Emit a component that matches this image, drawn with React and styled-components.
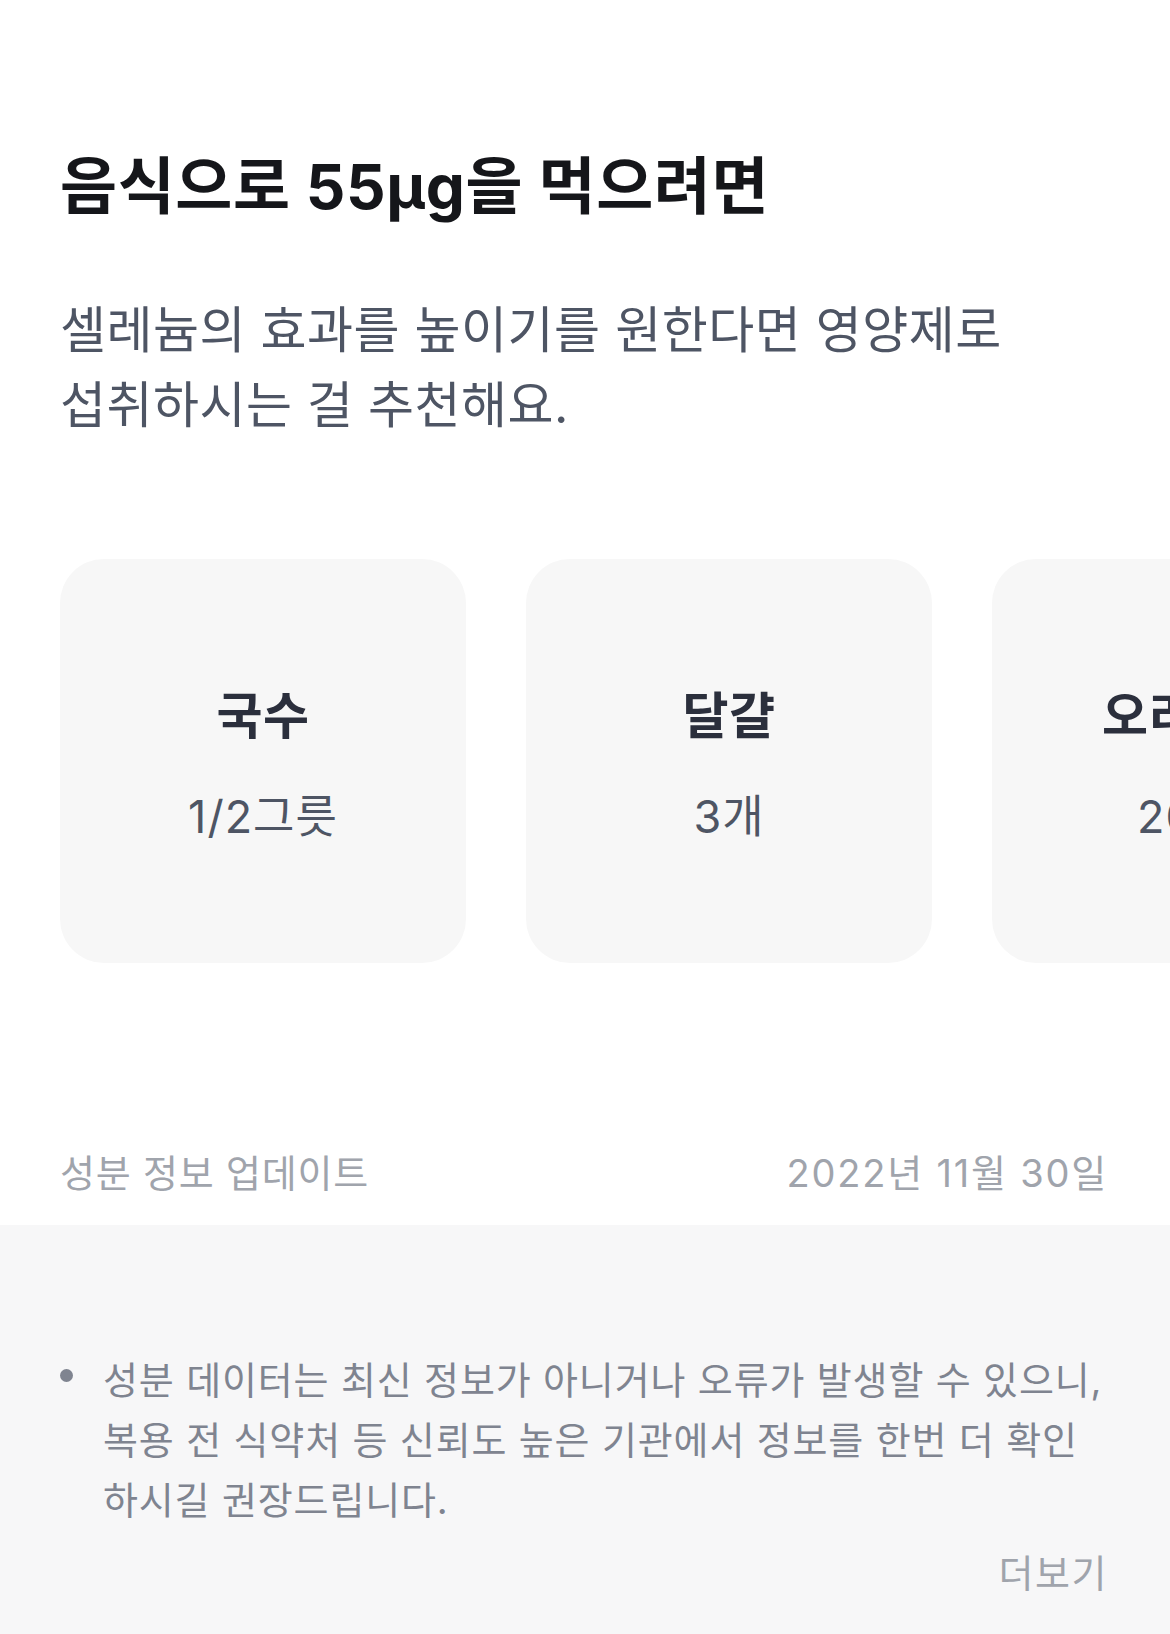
import React from "react";
import styled, {createGlobalStyle} from "styled-components";

const GlobalStyle = createGlobalStyle`
  html, body {
    margin: 0;
    padding: 0;
    background: #ffffff;
  }
  body {
    font-family: Inter, "Noto Sans CJK KR", sans-serif;
    -webkit-font-smoothing: antialiased;
  }
`;

const Page = styled.div`
  width: 1170px;
  overflow: hidden;
`;

const Intro = styled.section`
  padding: 147px 60px 0;
`;

const Title = styled.h1`
  margin: 0;
  font-size: 62px;
  line-height: 80px;
  font-weight: 700;
  letter-spacing: 0.6px;
  color: #15161a;
`;

const Subtitle = styled.p`
  margin: 66px 0 0;
  font-size: 50px;
  line-height: 75px;
  font-weight: 400;
  letter-spacing: 0.5px;
  color: #4e5564;
`;

const CardRow = styled.div`
  display: flex;
  gap: 60px;
  margin-top: 116px;
  padding-left: 60px;
`;

const Card = styled.div`
  flex: 0 0 406px;
  height: 404px;
  box-sizing: border-box;
  padding-top: 127px;
  border-radius: 44px;
  background: #f7f7f7;
  display: flex;
  flex-direction: column;
  align-items: center;
  white-space: nowrap;
`;

const FoodName = styled.div`
  font-size: 50px;
  line-height: 60px;
  font-weight: 700;
  letter-spacing: 0.5px;
  color: #2b2f3c;
`;

const FoodAmount = styled.div`
  margin-top: 43px;
  font-size: 45px;
  line-height: 56px;
  letter-spacing: 1px;
  color: #4e5564;
`;

const UpdateRow = styled.div`
  display: flex;
  justify-content: space-between;
  margin-top: 185px;
  padding: 0 62px 27px 60px;
  font-size: 38px;
  line-height: 50px;
  letter-spacing: 0.8px;
  color: #a0a4ac;
`;

const UpdateDate = styled.span`
  letter-spacing: 1.8px;
`;

const Notice = styled.section`
  background: #f7f7f8;
  padding: 125px 62px 60px 60px;
`;

const NoticeItem = styled.div`
  display: flex;
  align-items: flex-start;
  gap: 30px;
  font-size: 38px;
  line-height: 60px;
  letter-spacing: 0.85px;
  color: #7f8490;
`;

const Dot = styled.span`
  flex: 0 0 13px;
  height: 13px;
  margin-top: 19px;
  border-radius: 50%;
  background: #7f8490;
`;

const MoreLink = styled.div`
  margin-top: 18px;
  text-align: right;
  font-size: 38px;
  line-height: 50px;
  letter-spacing: 1.5px;
  color: #a0a4ac;
`;

const foods = [
    {name: "국수", amount: "1/2그릇"},
    {name: "달걀", amount: "3개"},
    {name: "오리고기", amount: "200g"},
];

export default function App() {
    return <Page>
        <GlobalStyle/>
        <Intro>
            <Title>음식으로 55μg을 먹으려면</Title>
            <Subtitle>
                셀레늄의 효과를 높이기를 원한다면 영양제로<br/>
                섭취하시는 걸 추천해요.
            </Subtitle>
        </Intro>

        <CardRow>
            {foods.map((food) => <Card key={food.name}>
                <FoodName>{food.name}</FoodName>
                <FoodAmount>{food.amount}</FoodAmount>
            </Card>)}
        </CardRow>

        <UpdateRow>
            <span>성분 정보 업데이트</span>
            <UpdateDate>2022년 11월 30일</UpdateDate>
        </UpdateRow>

        <Notice>
            <NoticeItem>
                <Dot/>
                <span>
                    성분 데이터는 최신 정보가 아니거나 오류가 발생할 수 있으니,<br/>
                    복용 전 식약처 등 신뢰도 높은 기관에서 정보를 한번 더 확인<br/>
                    하시길 권장드립니다.
                </span>
            </NoticeItem>
            <MoreLink>더보기</MoreLink>
        </Notice>
    </Page>;
}
